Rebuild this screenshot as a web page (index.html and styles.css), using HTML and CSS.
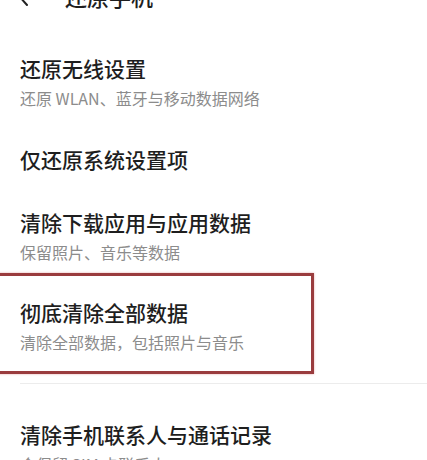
FILE: index.html
```html
<!DOCTYPE html>
<html lang="zh-CN">
<head>
    <meta charset="UTF-8">
    <meta name="viewport" content="width=device-width, initial-scale=1.0">
    <title>还原手机</title>
    <link rel="stylesheet" href="styles.css">
</head>
<body>
    <div class="screen">
        <header class="topbar">
            <span class="back">
                <svg width="14" height="22" viewBox="0 0 14 22">
                    <polyline points="11,2 3,11 11,20" fill="none" stroke="#222" stroke-width="2" stroke-linecap="round" stroke-linejoin="round"/>
                </svg>
            </span>
            <h1>还原手机</h1>
        </header>

        <ul class="options">
            <li class="option">
                <div class="title">还原无线设置</div>
                <div class="desc">还原 WLAN、蓝牙与移动数据网络</div>
            </li>
            <li class="option">
                <div class="title">仅还原系统设置项</div>
            </li>
            <li class="option">
                <div class="title">清除下载应用与应用数据</div>
                <div class="desc">保留照片、音乐等数据</div>
            </li>
            <!-- highlighted option -->
            <li class="option marked">
                <div class="title">彻底清除全部数据</div>
                <div class="desc">清除全部数据，包括照片与音乐</div>
            </li>
        </ul>

        <div class="divider"></div>

        <ul class="options">
            <li class="option last">
                <div class="title">清除手机联系人与通话记录</div>
                <div class="desc">会保留 SIM 卡联系人</div>
            </li>
        </ul>
    </div>
</body>
</html>
```

FILE: styles.css
```css
/* General Styles */
body {
    margin: 0;
    padding: 0;
    background: #fff;
    font-family: 'Noto Sans CJK SC', 'Noto Sans', sans-serif;
    color: #1e1e1e;
    overflow: hidden;
}

.screen {
    width: 427px;
    height: 460px;
    overflow: hidden;
}

/* Top bar (scrolled partly out of view) */
.topbar {
    display: flex;
    align-items: center;
    height: 44px;
    margin-top: -26px;
    padding-left: 16px;
}

.back {
    display: flex;
    width: 49px;
}

.topbar h1 {
    margin: 0;
    font-size: 22px;
    font-weight: 500;
}

/* Option list */
.options {
    list-style: none;
    margin: 0;
    padding: 19px 0 0;
}

.option {
    padding: 17px 20px 18px;
}

.title {
    font-size: 21px;
    line-height: 28px;
    font-weight: 500;
    color: #1e1e1e;
}

.desc {
    margin-top: 4px;
    font-size: 16px;
    line-height: 24px;
    color: #8c8c8c;
}

.marked {
    box-sizing: border-box;
    width: 320px;
    margin: -9px 0 0 -6px;
    padding: 22px 20px 17px 23px;
    border: 3px solid #9a3c3e;
    box-shadow: 0 0 2px rgba(214, 110, 110, 0.6);
}

.divider {
    height: 1px;
    margin: 9px 0 0 20px;
    background: #ececec;
}

.options + .divider + .options {
    padding-top: 0;
}

.option.last {
    padding-top: 36px;
}
```
